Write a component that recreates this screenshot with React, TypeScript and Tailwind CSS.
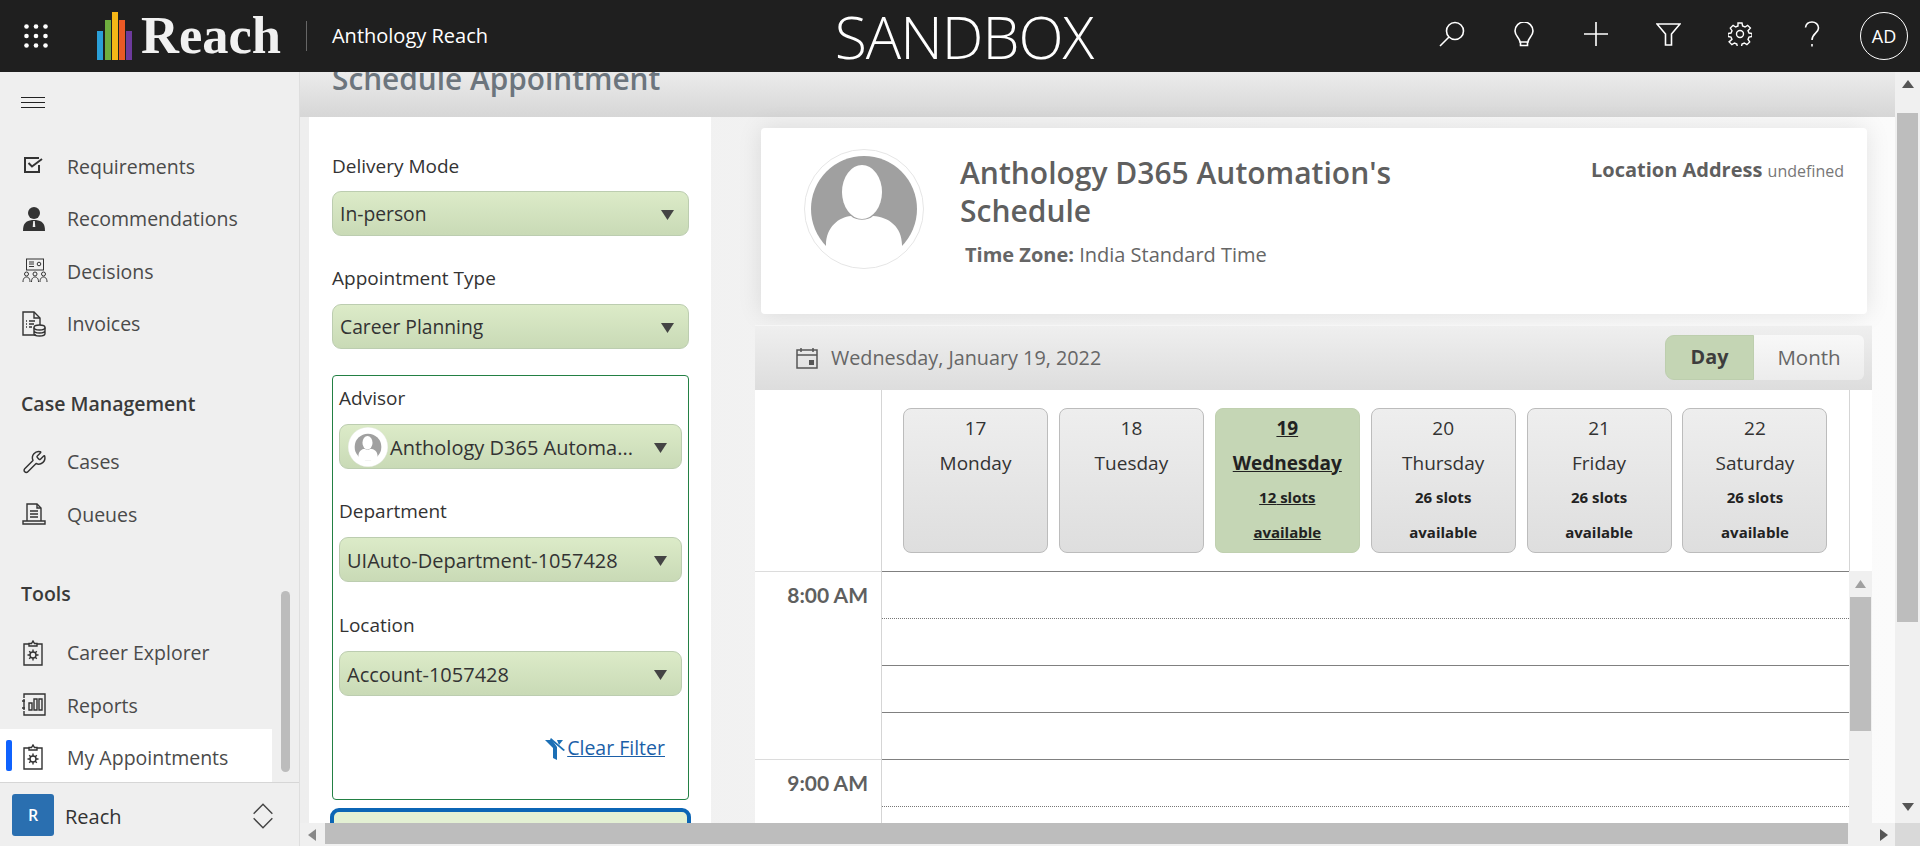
import { ReactNode } from 'react'
import { Wrench } from 'lucide-react'

const ink = '#3f3f3f'

function Caret() {
    return (
        <svg width="13" height="10" viewBox="0 0 13 10" className="shrink-0">
            <polygon points="0,0 13,0 6.5,10" fill="#444" />
        </svg>
    )
}

function Select({ children, className }: { children: ReactNode; className: string }) {
    return (
        <div className={`h-[45px] flex items-center justify-between rounded-[9px] border border-[#bccdb0] bg-linear-to-b from-[#dcebc8] to-[#c9dab6] text-[#333] pr-[14px] ${className}`}>
            <span className="flex items-center min-w-0 whitespace-nowrap">{children}</span>
            <Caret />
        </div>
    )
}

function Avatar({ size, inner = 53 }: { size: number; inner?: number }) {
    const k = inner / 53
    return (
        <svg width={size} height={size} viewBox="0 0 120 120">
            <circle cx="60" cy="60" r="59.5" fill="#fff" />
            <g transform={`translate(60 60) scale(${k}) translate(-60 -60)`}>
                <circle cx="60" cy="60" r="53" fill="#a0a0a0" />
                <ellipse cx="58" cy="43" rx="20" ry="27" fill="#fff" />
                <path d="M22 96 C22 78 35 68 47 67 C52 72 64 72 69 67 C85 68 98 78 98 96 L98 114 L22 114 Z" fill="#fff" />
            </g>
            <circle cx="60" cy="60" r="59.5" fill="none" stroke="#e6e6e6" />
        </svg>
    )
}

function NavIcon({ name }: { name: string }) {
    const s = { fill: 'none', stroke: '#333', strokeWidth: 1.4 }
    if (name === 'check') return (
        <svg width="24" height="24" viewBox="0 0 24 24">
            <path d="M17 4H3v14h14v-7" {...s} strokeWidth={2} />
            <path d="M6.5 9l3.5 3.5L20 5" {...s} strokeWidth={2} />
        </svg>
    )
    if (name === 'person') return (
        <svg width="24" height="26" viewBox="0 0 24 26">
            <circle cx="12" cy="7" r="6" fill="#333" />
            <path d="M1 25c0-8 3-10 9-11h4c6 1 9 3 9 11z" fill="#333" />
            <path d="M11.2 15h1.6l.5 6h-2.6z" fill="#efefef" />
        </svg>
    )
    if (name === 'decision') return (
        <svg width="26" height="26" viewBox="0 0 26 26">
            <rect x="4.5" y="1" width="17" height="11" {...s} strokeWidth={1} />
            <path d="M7 4h5M7 6h5M7 8.5h5" stroke="#333" />
            <circle cx="17" cy="6" r="1.8" {...s} strokeWidth={1} />
            <path d="M1 24c0-4 2-5 3.5-5S8 20 8 24M9.5 24c0-4 2-5 3.500-5s3.500 1 3.500 5M18 24c0-4 2-5 3.500-5s3.500 1 3.500 5" {...s} strokeWidth={1} />
            <circle cx="4.500" cy="16" r="2" {...s} strokeWidth={1} />
            <circle cx="13" cy="16" r="2" {...s} strokeWidth={1} />
            <circle cx="21.500" cy="16" r="2" {...s} strokeWidth={1} />
        </svg>
    )
    if (name === 'invoice') return (
        <svg width="24" height="26" viewBox="0 0 24 26">
            <path d="M14 24H1V1h11l6 6v7" {...s} />
            <path d="M12 1v6h6M4 10h1M7 10h6M4 13h1M7 13h5M4 16h1M7 16h3" {...s} />
            <ellipse cx="17.500" cy="16.500" rx="5.500" ry="2.500" {...s} />
            <path d="M12 16.500v6c0 1.500 2.500 2.500 5.500 2.500s5.500-1 5.500-2.500v-6M12 19.500c0 1.500 2.500 2.500 5.500 2.500s5.500-1 5.500-2.500" {...s} />
        </svg>
    )
    if (name === 'wrench') return <Wrench size={25} strokeWidth={1.4} color="#333" />
    if (name === 'queue') return (
        <svg width="24" height="24" viewBox="0 0 24 24">
            <path d="M5 19V2h10l4 4v13" {...s} />
            <path d="M15 2v4h4M8 9h8M8 12h8M8 15h8" {...s} />
            <path d="M1 19h22v3H1z" {...s} />
        </svg>
    )
    if (name === 'clipboard') return (
        <svg width="22" height="26" viewBox="0 0 22 26">
            <path d="M7 4H2v21h18V4h-5" {...s} />
            <path d="M7 6V3.500h2.500L11 1l1.500 2.500H15V6z" {...s} />
            <circle cx="11" cy="15" r="3" {...s} />
            <path d="M11 9.500v2.500M11 18v2.500M5.500 15H8M14 15h2.500M7.200 11.200l1.800 1.800M13 17l1.800 1.800M14.800 11.200L13 13M9 17l-1.800 1.800" {...s} />
        </svg>
    )
    return (
        <svg width="24" height="24" viewBox="0 0 24 24">
            <path d="M2 5V1h21v21H2v-4" {...s} />
            <path d="M0 8h3M0 15h3M2 6v11" {...s} />
            <path d="M7 10h3v7H7zM12 6h3v11h-3zM17 6h3v11h-3z" {...s} />
        </svg>
    )
}

function NavRow({ icon, label, active }: { icon: string; label: string; active?: boolean }) {
    return (
        <div className={`relative w-[272px] flex items-center pl-[67px] text-[19.5px] text-[#4a4a4a] ${active ? 'bg-white h-[55.6px] -mt-[3px] pt-[3px]' : 'h-[52.6px]'}`}>
            {active && <div className="absolute left-[6px] top-[11px] w-[6px] h-[31px] rounded-[2px] bg-[#0f62fe]" />}
            <span className="absolute left-[22px] top-1/2 -translate-y-1/2 flex"><NavIcon name={icon} /></span>
            {label}
        </div>
    )
}

function Sidebar() {
    return (
        <aside className="w-[300px] shrink-0 flex flex-col bg-[#efefef] border-r border-[#dedede]">
            <div className="relative flex-1 min-h-0 overflow-hidden">
                <div className="h-[68px] pl-[21px] pt-[25px] flex flex-col gap-[4px]">
                    <div className="w-[24px] h-px bg-[#222]" />
                    <div className="w-[24px] h-px bg-[#222]" />
                    <div className="w-[24px] h-px bg-[#222]" />
                </div>
                <NavRow icon="check" label="Requirements" />
                <NavRow icon="person" label="Recommendations" />
                <NavRow icon="decision" label="Decisions" />
                <NavRow icon="invoice" label="Invoices" />
                <div className="pl-[21px] h-[53px] mt-[27px] flex items-center text-[19.5px] font-semibold text-[#3a3a3a]">Case Management</div>
                <div className="h-[5px]" />
                <NavRow icon="wrench" label="Cases" />
                <NavRow icon="queue" label="Queues" />
                <div className="pl-[21px] h-[53px] mt-[27px] flex items-center text-[19.5px] font-semibold text-[#3a3a3a]">Tools</div>
                <div className="h-[6px]" />
                <NavRow icon="clipboard" label="Career Explorer" />
                <NavRow icon="chart" label="Reports" />
                <NavRow icon="clipboard" label="My Appointments" active />
                <div className="absolute left-[281px] top-[519px] w-[9px] h-[181px] rounded-full bg-[#bcbcbc]" />
            </div>
            <div className="h-[64px] shrink-0 border-t border-[#d6d6d6] flex items-center pl-[12px] pr-[25px]">
                <div className="w-[42px] h-[42px] rounded-[3px] bg-[#2a6fb0] flex items-center justify-center text-white font-semibold text-[16px]">R</div>
                <span className="ml-[11px] mt-[4px] text-[20px] text-[#333]">Reach</span>
                <svg width="22" height="28" viewBox="0 0 18 24" fill="none" stroke="#444" strokeWidth="1.2" className="ml-auto mt-[3px]">
                    <path d="M1 10l8-8 8 8M1 14l8 8 8-8" />
                </svg>
            </div>
        </aside>
    )
}

function HeaderIcon({ children }: { children: ReactNode }) {
    return <div className="w-[72px] -mt-[4px] flex justify-center">{children}</div>
}

function Header() {
    const white = { fill: 'none', stroke: '#fff', strokeWidth: 1.6 }
    return (
        <header className="h-[72px] shrink-0 bg-[#1f1f1f] flex items-center text-white">
            <svg width="24" height="24" viewBox="0 0 24 24" fill="#fff" className="ml-[24px]">
                {[2.5, 12, 21.5].flatMap(y => [2.5, 12, 21.5].map(x => <circle key={`${x}-${y}`} cx={x} cy={y} r="2.300" />))}
            </svg>
            <svg width="36" height="50" viewBox="0 0 36 50" className="ml-[49px]">
                <rect x="0" y="20" width="6" height="29" fill="#2a9fd8" />
                <rect x="8" y="9" width="6" height="40" fill="#6fae3f" />
                <rect x="15" y="1" width="6" height="48" fill="#f5b617" />
                <rect x="22" y="9" width="6" height="40" fill="#ea5a25" />
                <rect x="29" y="20" width="6" height="29" fill="#6d3a9c" />
            </svg>
            <span className="ml-[8px] font-['Liberation_Serif',serif] font-bold text-[52.5px] leading-none text-[#f1f1f1] -mt-[2px]">Reach</span>
            <div className="ml-[25px] w-px h-[30px] bg-[#666]" />
            <span className="ml-[25px] text-[20px]">Anthology Reach</span>
            <span className="ml-[336px] w-[280px] text-center text-[59px] leading-[70px] font-light tracking-[-1px]">SANDBOX</span>
            <div className="ml-auto flex items-center pr-[12px]">
                <HeaderIcon>
                    <svg width="26" height="26" viewBox="0 0 26 26" {...white}>
                        <circle cx="16" cy="10" r="8.500" />
                        <path d="M10 16L1 25" />
                    </svg>
                </HeaderIcon>
                <HeaderIcon>
                    <svg width="20" height="25" viewBox="0 0 20 25" {...white}>
                        <path d="M6 20c0-4-5-6-5-11a9 9 0 0 1 18 0c0 5-5 7-5 11z" />
                        <path d="M6.500 20v3.500h7V20" />
                    </svg>
                </HeaderIcon>
                <HeaderIcon>
                    <svg width="24" height="24" viewBox="0 0 24 24" {...white}>
                        <path d="M0 12h24M12 0v24" />
                    </svg>
                </HeaderIcon>
                <HeaderIcon>
                    <svg width="25" height="23" viewBox="0 0 25 23" {...white}>
                        <path d="M1 1h23l-8.500 10v11h-6V11z" />
                    </svg>
                </HeaderIcon>
                <HeaderIcon>
                    <svg width="24" height="24" viewBox="0 0 24 24" {...white} strokeWidth={1.400}>
                        <circle cx="12" cy="12" r="3.500" />
                        <path d="M10 1h4l.6 3 2.400 1 2.600-1.700 2.800 2.800L20 8.700l1 2.300 3 .5v3l-3 .6-1 2.300 1.700 2.500-2.800 2.800-2.600-1.700-2.300 1-.6 3h-4l-.6-3-2.300-1-2.600 1.700-2.800-2.800L4 17.400l-1-2.300-3-.6v-3l3-.5 1-2.300-1.700-2.600 2.800-2.800L7.700 5l2.300-1z" />
                    </svg>
                </HeaderIcon>
                <HeaderIcon>
                    <svg width="16" height="26" viewBox="0 0 16 26" {...white}>
                        <path d="M1.500 6.500C2 3 4.500 1 8 1c3.500 0 6.500 2.500 6.500 6 0 5-6.500 5.500-6.500 12" />
                        <path d="M8 23v2.500" />
                    </svg>
                </HeaderIcon>
                <div className="ml-[12px] w-[48px] h-[48px] rounded-full border border-white flex items-center justify-center text-[18px]">AD</div>
            </div>
        </header>
    )
}

function FilterPanel() {
    return (
        <div className="w-[402px] ml-[9px] shrink-0 bg-white pl-[23px] pr-[22px] overflow-hidden text-[19px]">
            <div className="h-[74px] flex items-center pt-[24px] text-[#333]">Delivery Mode</div>
            <Select className="pl-[7px] pt-[2px] text-[19.3px]">In-person</Select>
            <div className="h-[68px] flex items-center pt-[16px] text-[#333]">Appointment Type</div>
            <Select className="pl-[7px] pt-[2px] text-[19.3px]">Career Planning</Select>
            <div className="mt-[26px] h-[425px] rounded-[4px] border border-[#238044] px-[6px] text-[#333]">
                <div className="h-[48px] flex items-center pb-[4px]">Advisor</div>
                <Select className="pl-[9px] pt-[3px] text-[20px]">
                    <span className="w-[40px] h-[40px] -ml-[1px] -mt-[3px] mr-[2px] flex"><Avatar size={40} inner={40} /></span>
                    Anthology D365 Automa...
                </Select>
                <div className="h-[68px] flex items-center pt-[16px]">Department</div>
                <Select className="pl-[7px] pt-[3px] text-[20px]">UIAuto-Department-1057428</Select>
                <div className="h-[69px] flex items-center pt-[17px]">Location</div>
                <Select className="pl-[7px] pt-[3px] text-[20px]">Account-1057428</Select>
                <div className="mt-[37px] pr-[17px] flex justify-end items-center text-[19.5px] text-[#1b5fa8] underline">
                    <svg width="22" height="22" viewBox="0 0 22 22" fill="#1b6fb5" className="mt-[3px]">
                        <path d="M0 2l7 0 5 7v13l-4-2V10z" />
                        <path d="M6 0l14 12-1.500 1L5 1.500z" />
                        <path d="M12 2h6l-4 5z" />
                    </svg>
                    Clear Filter
                </div>
            </div>
            <div className="mt-[8px] -mx-[2px] h-[40px] rounded-[9px] border-4 border-[#0b65b5] bg-[#e3f0d3]" />
        </div>
    )
}

function DayCard({ day, name, slots, active }: { day: number; name: string; slots?: number; active?: boolean }) {
    return (
        <div className={`w-[145px] h-[145px] rounded-[8px] border flex flex-col items-center text-[19px] ${active ? 'bg-[#c5d6b5] border-[#c0d0b0] font-bold underline text-[#222]' : 'bg-linear-to-b from-[#eeeeee] to-[#dedede] border-[#bcbcbc] text-[#333]'}`}>
            <div className="h-[37px] mt-[1px] flex items-center">{day}</div>
            <div className="h-[32px] flex items-center">{name}</div>
            {slots && (
                <>
                    <div className="h-[36px] flex items-center text-[15px] font-bold text-[#222]">{slots} slots</div>
                    <div className="h-[34px] flex items-center text-[15px] font-bold text-[#222]">available</div>
                </>
            )}
        </div>
    )
}

function Slot({ dotted }: { dotted?: boolean }) {
    return <div className={`h-[47px] border-t ${dotted ? 'border-dotted border-[#777]' : 'border-[#808080]'}`} />
}

function Calendar() {
    return (
        <div className="w-[1117px] mt-[11px] flex-1 min-h-0 flex flex-col bg-white">
            <div className="h-[65px] shrink-0 border-t border-[#f6f6f6] bg-linear-to-b from-[#efefef] to-[#dddddd] flex items-center pl-[41px] pr-[8px] text-[19.8px] text-[#666]">
                <svg width="22" height="22" viewBox="0 0 22 22" fill="none" stroke="#555" strokeWidth="1.500" className="mr-[13px]">
                    <path d="M1 3h20v18H1zM1 8h20M5 1v4M17 1v4" />
                    <rect x="13" y="13" width="5" height="5" fill="#555" stroke="none" />
                </svg>
                Wednesday, January 19, 2022
                <div className="ml-auto -mt-[2px] flex h-[45px] w-[199px] rounded-[8px]">
                    <div className="w-[89px] rounded-l-[9px] border border-[#bdceae] bg-[#c4d5b4] flex items-center justify-center font-bold text-[#3d3d3d]">Day</div>
                    <div className="flex-1 rounded-r-[6px] bg-linear-to-b from-[#f8f8f8] to-[#ececec] flex items-center justify-center text-[20.5px]">Month</div>
                </div>
            </div>
            <div className="h-[181px] shrink-0 flex">
                <div className="w-[127px] border-r border-[#d5d5d5]" />
                <div className="w-[968px] border-r border-[#d5d5d5] pl-[21px] pt-[18px] flex gap-[10.9px]">
                    <DayCard day={17} name="Monday" />
                    <DayCard day={18} name="Tuesday" />
                    <DayCard day={19} name="Wednesday" slots={12} active />
                    <DayCard day={20} name="Thursday" slots={26} />
                    <DayCard day={21} name="Friday" slots={26} />
                    <DayCard day={22} name="Saturday" slots={26} />
                </div>
            </div>
            <div className="flex-1 min-h-0 flex overflow-hidden">
                <div className="w-[127px] border-r border-[#d5d5d5] font-['Lato',sans-serif] font-bold text-[21px] text-[#5f5f5f] text-right">
                    <div className="h-[188px] border-t border-[#dcdcdc] pr-[13px] pt-[11px] leading-[24px]">8:00 AM</div>
                    <div className="h-[64px] border-t border-[#dcdcdc] pr-[13px] pt-[11px] leading-[24px]">9:00 AM</div>
                </div>
                <div className="w-[967px]">
                    <Slot />
                    <Slot dotted />
                    <Slot />
                    <Slot />
                    <Slot />
                    <Slot dotted />
                </div>
                <div className="w-[23px] bg-[#f0f0f0] flex flex-col items-center pt-[9px]">
                    <svg width="11" height="8" viewBox="0 0 11 8"><polygon points="0,8 11,8 5.500,0" fill="#a0a0a0" /></svg>
                    <div className="mt-[9px] w-[21px] h-[134px] bg-[#bdbdbd]" />
                </div>
            </div>
        </div>
    )
}

export default function App() {
    return (
        <div className="w-[1920px] h-[846px] flex flex-col overflow-hidden font-['Open_Sans',sans-serif]" style={{ color: ink }}>
            <Header />
            <div className="flex flex-1 min-h-0">
                <Sidebar />
                <div className="flex-1 min-w-0 flex flex-col">
                    <div className="flex-1 min-h-0 flex">
                        <div className="flex-1 min-w-0 flex flex-col">
                            <div className="h-[45px] shrink-0 overflow-hidden bg-linear-to-b from-[#ececec] to-[#d6d6d6] pl-[32px]">
                                <div className="-mt-[12px] text-[29.8px] leading-[38px] font-semibold text-[#6c757d] whitespace-nowrap">Schedule Appointment</div>
                            </div>
                            <div className="flex-1 min-h-0 flex bg-linear-to-r from-[#eeeeee] to-[#fbfbfb]">
                                <FilterPanel />
                                <div className="flex-1 min-w-0 flex flex-col items-start pl-[44px] pt-[11px]">
                                    <div className="ml-[6px] w-[1106px] h-[186px] shrink-0 rounded-[4px] bg-white shadow-[0_0_24px_rgba(0,0,0,0.1)] flex">
                                        <div className="ml-[43px] mt-[21px]"><Avatar size={120} /></div>
                                        <div className="ml-[36px] pt-[26px] w-[500px]">
                                            <div className="text-[30px] leading-[38px] font-semibold text-[#5f5f5f] whitespace-nowrap">Anthology D365 Automation's<br />Schedule</div>
                                            <div className="ml-[5px] mt-[10px] text-[20px] text-[#666]"><b className="font-bold">Time Zone:</b> India Standard Time</div>
                                        </div>
                                        <div className="ml-auto pr-[23px] pt-[27px] text-[20px] font-bold text-[#5f5f5f] whitespace-nowrap">
                                            Location Address <span className="text-[16px] font-normal text-[#777]">undefined</span>
                                        </div>
                                    </div>
                                    <Calendar />
                                </div>
                            </div>
                        </div>
                        <div className="w-[25px] shrink-0 bg-[#f0f0f0] flex flex-col items-center pt-[8px] pb-[12px]">
                            <svg width="12" height="8" viewBox="0 0 12 8"><polygon points="0,8 12,8 6,0" fill="#555" /></svg>
                            <div className="mt-[25px] w-[21px] h-[509px] bg-[#bdbdbd]" />
                            <svg width="12" height="8" viewBox="0 0 12 8" className="mt-auto"><polygon points="0,0 12,0 6,8" fill="#555" /></svg>
                        </div>
                    </div>
                    <div className="h-[23px] shrink-0 flex items-center bg-[#f0f0f0]">
                        <svg width="8" height="12" viewBox="0 0 8 12" className="ml-[8px]"><polygon points="8,0 8,12 0,6" fill="#888" /></svg>
                        <div className="ml-[9px] w-[1523px] h-[21px] self-start bg-[#bdbdbd]" />
                        <svg width="8" height="12" viewBox="0 0 8 12" className="ml-[32px]"><polygon points="0,0 0,12 8,6" fill="#555" /></svg>
                        <div className="ml-auto w-[25px] h-full bg-[#d9d9d9]" />
                    </div>
                </div>
            </div>
        </div>
    )
}
